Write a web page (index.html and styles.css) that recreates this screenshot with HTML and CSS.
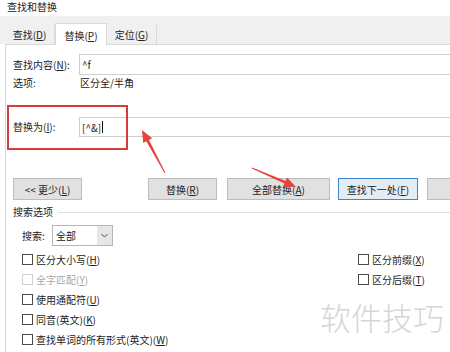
FILE: index.html
```html
<!DOCTYPE html>
<html lang="zh-CN">
<head>
    <meta charset="UTF-8">
    <meta name="viewport" content="width=device-width, initial-scale=1.0">
    <title>查找和替换</title>
    <link rel="stylesheet" href="styles.css">
</head>
<body>
    <div class="title">查找和替换</div>

    <div class="tabs">
        <div class="tab">查找(<u>D</u>)</div>
        <div class="tab active">替换(<u>P</u>)</div>
        <div class="tab">定位(<u>G</u>)</div>
    </div>

    <div class="panel">
        <div class="field first">
            <span class="label">查找内容(<u>N</u>):</span>
            <div class="input">^f</div>
        </div>
        <div class="options">
            <span class="label">选项:</span>
            <span>区分全/半角</span>
        </div>
        <div class="field replace">
            <span class="label">替换为(<u>I</u>):</span>
            <div class="input">[^&amp;]<span class="caret"></span></div>
        </div>

        <div class="buttons">
            <div class="btn less">&lt;&lt; 更少(<u>L</u>)</div>
            <div class="btn replace-one">替换(<u>R</u>)</div>
            <div class="btn replace-all">全部替换(<u>A</u>)</div>
            <div class="btn find-next">查找下一处(<u>F</u>)</div>
            <div class="btn cut"></div>
        </div>

        <div class="group-head"><span>搜索选项</span></div>

        <div class="search-row">
            <span class="search-label">搜索:</span>
            <div class="select">
                <span class="select-text">全部</span>
                <span class="select-btn">
                    <svg width="7" height="5" viewBox="0 0 7 5"><polyline points="0.5,1 3.5,4 6.5,1" fill="none" stroke="#555" stroke-width="1"/></svg>
                </span>
            </div>
        </div>

        <div class="checks">
            <div class="check"><span class="box"></span>区分大小写(<u>H</u>)</div>
            <div class="check disabled"><span class="box"></span>全字匹配(<u>Y</u>)</div>
            <div class="check"><span class="box"></span>使用通配符(<u>U</u>)</div>
            <div class="check"><span class="box"></span>同音(英文)(<u>K</u>)</div>
            <div class="check"><span class="box"></span>查找单词的所有形式(英文)(<u>W</u>)</div>
            <div class="check"><span class="box"></span>区分前缀(<u>X</u>)</div>
            <div class="check"><span class="box"></span>区分后缀(<u>T</u>)</div>
        </div>
    </div>

    <!-- annotations drawn over the dialog -->
    <div class="mark-box"></div>
    <svg class="arrows" width="450" height="352" viewBox="0 0 450 352">
        <polygon points="142,130 152.1,138.2 149,139.9 165.4,172.8 164.6,173.2 146.3,141.3 143.2,142.9" fill="#e5433c"/>
        <polygon points="296,187 287,177.6 285.6,180.9 252.2,167.5 251.8,168.5 284.4,183.6 283,186.8" fill="#e5433c"/>
    </svg>
    <div class="watermark">软件技巧</div>
</body>
</html>
```

FILE: styles.css
```css
* {
    margin: 0;
    padding: 0;
    box-sizing: border-box;
}
body {
    width: 450px;
    height: 352px;
    overflow: hidden;
    position: relative;
    background: #fff;
    font-family: "Noto Sans CJK SC", "Noto Sans", sans-serif;
    font-size: 10px;
    color: #222;
}
u {
    text-decoration-thickness: 1px;
    text-underline-offset: 1px;
}

.title {
    height: 16px;
    line-height: 14px;
    padding-left: 7px;
    white-space: nowrap;
}

.tabs {
    height: 28px;
    background: #f0f0f0;
    display: flex;
    align-items: flex-end;
    padding-left: 5px;
}
.tab {
    width: 50px;
    height: 19px;
    line-height: 14px;
    padding-top: 3px;
    text-align: center;
    border-right: 1px solid #dadada;
}
.tab.active {
    width: 52px;
    height: 22px;
    padding-top: 5px;
    margin-bottom: -1px;
    background: #fff;
    border: 1px solid #d9d9d9;
    border-bottom: none;
}

.panel {
    margin-left: 5px;
    width: 445px;
    height: 308px;
    overflow: hidden;
    border-top: 1px solid #d9d9d9;
    border-left: 1px solid #d9d9d9;
    padding-left: 7px;
}

.field {
    display: flex;
    align-items: center;
}
.field.first {
    margin-top: 9px;
    height: 21px;
}
.field.replace {
    margin-top: 27px;
    height: 20px;
}
.label {
    width: 66px;
    flex-shrink: 0;
    line-height: 14px;
}
.input {
    flex: 1;
    height: 100%;
    border: 1px solid #cfcfcf;
    border-right: none;
    padding-left: 2px;
    line-height: 17px;
    display: flex;
    align-items: center;
}
.caret {
    width: 1px;
    height: 12px;
    background: #111;
    margin-left: 1px;
}

.options {
    margin-top: 1px;
    height: 14px;
    line-height: 14px;
    display: flex;
}
.options .label {
    width: 67px;
}

.buttons {
    margin-top: 41px;
    height: 22px;
    display: flex;
    white-space: nowrap;
}
.btn {
    height: 22px;
    flex-shrink: 0;
    background: #e1e1e1;
    border: 1px solid #bdbdbd;
    display: flex;
    align-items: center;
    justify-content: center;
}
.btn.less { width: 69px; }
.btn.replace-one { width: 69px; margin-left: 66px; }
.btn.replace-all { width: 103px; margin-left: 10px; }
.btn.find-next {
    width: 80px;
    margin-left: 8px;
    background: #e4edf6;
    border-color: #3d87cf;
}
.btn.cut { width: 80px; margin-left: 9px; }

.group-head {
    margin-top: 5px;
    height: 14px;
    line-height: 14px;
    display: flex;
    align-items: center;
}
.group-head::after {
    content: "";
    flex: 1;
    height: 1px;
    background: #dedede;
    margin-left: 5px;
}

.search-row {
    margin-top: 6px;
    height: 21px;
    padding-left: 9px;
    display: flex;
    align-items: center;
}
.search-label {
    width: 30px;
}
.select {
    width: 61px;
    height: 21px;
    border: 1px solid #b5b5b5;
    display: flex;
}
.select-text {
    flex: 1;
    padding-left: 3px;
    line-height: 19px;
}
.select-btn {
    width: 15px;
    background: #e6e6e6;
    display: flex;
    align-items: center;
    justify-content: center;
}

.checks {
    margin-top: 3px;
    padding-left: 9px;
    display: grid;
    grid-template-rows: repeat(5, 20px);
    grid-template-columns: 336px auto;
    grid-auto-flow: column;
}
.check {
    display: flex;
    align-items: center;
    white-space: nowrap;
}
.box {
    width: 11px;
    height: 11px;
    border: 1px solid #4a4a4a;
    background: #fff;
    margin-right: 3px;
}
.check.disabled {
    color: #a8a8a8;
}
.check.disabled .box {
    border-color: #cfcfcf;
}

.mark-box {
    position: absolute;
    left: 7px;
    top: 105px;
    width: 121px;
    height: 45px;
    border: 2px solid #d93a3e;
}
.arrows {
    position: absolute;
    left: 0;
    top: 0;
}
.watermark {
    position: absolute;
    left: 320px;
    top: 301px;
    font-size: 31px;
    line-height: 31px;
    color: #d6d6d6;
    font-weight: 300;
    white-space: nowrap;
}
```
